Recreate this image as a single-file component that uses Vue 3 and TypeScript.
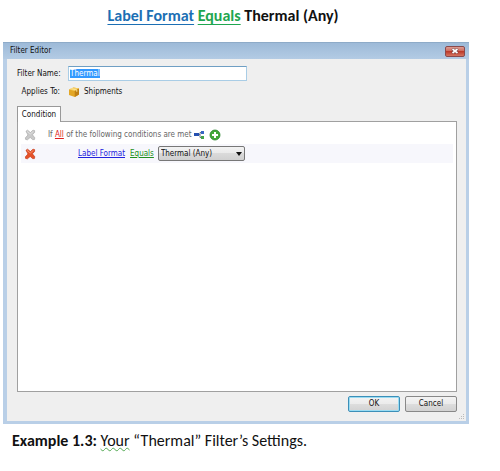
<script setup lang="ts">
import { onMounted, ref } from 'vue'

const filterName = ref('Thermal')
const labelFormat = ref('Thermal (Any)')
const formats: string[] = ['Thermal (Any)', 'Standard']
const nameBox = ref<HTMLInputElement | null>(null)

onMounted(() => {
  nameBox.value?.focus()
  nameBox.value?.select()
})
</script>

<template>
  <main class="page">
    <h1 class="heading">
      <span class="blue">Label Format</span> <span class="green">Equals</span> Thermal (Any)
    </h1>

    <section class="window">
      <header class="titlebar">
        <span>Filter Editor</span>
        <button class="close" type="button" aria-label="Close">
          <svg viewBox="0 0 8 6" width="8" height="6">
            <path d="M1.3 .8 6.7 5.2M6.7 .8 1.3 5.2" stroke="#6b3030" stroke-width="2.8" />
            <path d="M1.5 1 6.5 5M6.5 1 1.5 5" stroke="#fff" stroke-width="1.8" />
          </svg>
        </button>
      </header>

      <div class="body">
        <div class="fields">
          <label for="filter-name">Filter Name:</label>
          <input id="filter-name" ref="nameBox" v-model="filterName" type="text" spellcheck="false" />
          <span class="caption">Applies To:</span>
          <span class="target">
            <svg viewBox="0 0 12 12" width="12" height="12">
              <path d="M1 3.6 5.5 1.4 11 2.6v6L6.8 11 1 9Z" fill="#e3a726" />
              <path d="M1 3.6 5.5 1.4 11 2.6 6.7 5Z" fill="#f6ce62" />
              <path d="M6.7 5 11 2.6v6L6.8 11Z" fill="#c08014" />
              <path d="M3.2 2.6 8.8 4v1.8" fill="none" stroke="#fbe59b" stroke-width=".9" />
            </svg>
            Shipments
          </span>
        </div>

        <button class="tab" type="button">Condition</button>
        <div class="panel">
          <div class="row">
            <button class="icon remove" type="button" aria-label="Remove group" disabled>
              <svg viewBox="0 0 12 12" width="12" height="12">
                <path d="M2 2.2 3.6 1.2 6.4 3.6 9 1.2 10.6 1.6 10.6 3.4 8.4 5.8 10.8 8.8 10.4 10.6 8.6 10.6 6.2 8.4 3.4 10.8 1.6 10.4 1.4 8.8 4 6Z" fill="#c9c9c9" stroke="#ababab" stroke-width=".7" />
                <path d="M3 2.4 6.3 5 9.4 2.4" fill="none" stroke="#e2e2e2" stroke-width=".9" />
              </svg>
            </button>
            <span class="sentence">If <a href="#" class="all">All</a> of the following conditions are met</span>
            <button class="icon" type="button" aria-label="Add group">
              <svg viewBox="0 0 12 12" width="12" height="12">
                <path d="M5 5.5h2M9 3.5H7v5h2" fill="none" stroke="#65758a" stroke-width="1" />
                <path d="M1 4h5v3H1z" fill="#2450b0" />
                <path d="M8 2h3v3H8z" fill="#3867c5" />
                <path d="M8 7h3v3H8z" fill="#43a348" />
              </svg>
            </button>
            <button class="icon add" type="button" aria-label="Add condition">
              <svg viewBox="0 0 12 12" width="12" height="12">
                <circle cx="6" cy="6" r="5" fill="#43a839" stroke="#27822b" stroke-width=".8" />
                <path d="M6 3v6M3 6h6" stroke="#fff" stroke-width="2" />
              </svg>
            </button>
          </div>
          <div class="row condition">
            <button class="icon remove" type="button" aria-label="Remove condition">
              <svg viewBox="0 0 12 12" width="12" height="12">
                <path d="M2 2.2 3.6 1.2 6.4 3.6 9 1.2 10.6 1.6 10.6 3.4 8.4 5.8 10.8 8.8 10.4 10.6 8.6 10.6 6.2 8.4 3.4 10.8 1.6 10.4 1.4 8.8 4 6Z" fill="#e65329" stroke="#c63a1a" stroke-width=".7" />
                <path d="M3 2.4 6.3 5 9.4 2.4" fill="none" stroke="#f79a72" stroke-width=".9" />
              </svg>
            </button>
            <a href="#" class="field">Label Format</a>
            <a href="#" class="operator">Equals</a>
            <span class="picker">
              <select v-model="labelFormat" aria-label="Label format value">
                <option v-for="format in formats" :key="format">{{ format }}</option>
              </select>
              <svg viewBox="0 0 6 4" width="6" height="4"><path d="M0 0h6L3 4Z" fill="#111" /></svg>
            </span>
          </div>
        </div>

        <footer class="actions">
          <button class="push primary" type="button">OK</button>
          <button class="push" type="button">Cancel</button>
        </footer>
        <svg class="grip" viewBox="0 0 6 6" width="6" height="6">
          <path d="M4 0h1v1H4zM2 2h1v1H2zM4 2h1v1H4zM0 4h1v1H0zM2 4h1v1H2zM4 4h1v1H4z" fill="#bbb" />
        </svg>
      </div>
    </section>

    <p class="example"><b>Example 1.3:</b> <span class="wavy">Your</span> “Thermal” Filter’s Settings.</p>
  </main>
</template>

<style>
body {
  background: #fff;
}
</style>

<style scoped>
* {
  box-sizing: border-box;
}
.page {
  padding: 5px 31px 0 3px;
  font-family: Carlito, Lato, sans-serif;
  color: #111;
}
.heading {
  margin: 0 0 15px;
  padding-right: 26px;
  font-size: 16px;
  line-height: 22px;
  font-weight: 700;
  text-align: center;
}
.blue,
.green {
  text-decoration: underline;
  text-underline-offset: 3px;
  text-decoration-thickness: 1px;
}
.blue {
  color: #1c6fb4;
}
.green {
  color: #1fa650;
}
.window {
  padding: 0 3px 3px 4px;
  border-top: 1px solid #8eabc8;
  background: #b9cfe7;
  font-family: "DejaVu Sans Condensed", "DejaVu Sans", sans-serif;
  font-size: 8px;
  line-height: 12px;
}
.titlebar {
  display: flex;
  align-items: center;
  justify-content: space-between;
  height: 16px;
  margin: 0 -3px 0 -4px;
  padding: 0 4px 0 7px;
  background: linear-gradient(#9dbad8, #b3cbe4);
}
button,
input,
select {
  font: inherit;
  color: inherit;
}
.close {
  display: flex;
  align-items: center;
  justify-content: center;
  width: 20px;
  height: 11px;
  padding: 0;
  border: 1px solid #8a4a4c;
  border-radius: 2px;
  background: linear-gradient(#dd9c92, #cd6a5c 45%, #bd3b2b 50%, #d47460);
}
.body {
  position: relative;
  padding: 7px 9px 9px 10px;
  background: #efefef;
}
.fields {
  display: grid;
  grid-template-columns: 43px minmax(0, 179px);
  column-gap: 8px;
  row-gap: 5px;
  align-items: center;
}
.caption {
  text-align: right;
}
.fields label {
  text-align: right;
  white-space: nowrap;
}
.fields input {
  width: 100%;
  height: 15px;
  padding: 0 1px;
  border: 1px solid #a9cde6;
  border-top-color: #6f9fc4;
  background: #fff;
  outline: none;
}
.fields input::selection {
  background: #3399ff;
  color: #fff;
}
.target {
  display: flex;
  align-items: center;
  gap: 4px;
}
.tab {
  display: block;
  position: relative;
  z-index: 1;
  width: 44px;
  height: 16px;
  margin: 8px 0 -1px;
  padding: 0;
  border: 1px solid #999;
  border-bottom: 0;
  background: #fff;
}
.panel {
  min-height: 271px;
  padding: 3px;
  border: 1px solid #a0a0a0;
  background: #fff;
}
.row {
  display: flex;
  align-items: center;
  height: 19px;
  padding-left: 3px;
  color: #666;
}
.condition {
  background: #f7f7fc;
}
.icon {
  display: flex;
  padding: 0;
  border: 0;
  background: none;
}
.remove {
  margin-right: 12px;
}
.sentence {
  margin-right: 1px;
}
.add {
  margin-left: 4px;
}
.all {
  color: #e02020;
}
.field {
  margin-left: 30px;
  color: #2222dd;
}
.operator {
  margin: 0 4px 0 5px;
  color: #209020;
}
.picker {
  display: grid;
  align-items: center;
  width: 87px;
  color: #111;
}
.picker > * {
  grid-area: 1 / 1;
}
.picker svg {
  justify-self: end;
  margin-right: 3px;
  pointer-events: none;
}
.picker select {
  appearance: none;
  width: 100%;
  height: 15px;
  padding: 0 2px;
  border: 1px solid #777;
  border-radius: 2px;
  background: linear-gradient(#f3f3f3, #e9e9e9 50%, #dadada 50%, #d0d0d0);
}
.actions {
  display: flex;
  justify-content: flex-end;
  gap: 5px;
  margin-top: 4px;
}
.push {
  width: 52px;
  height: 16px;
  padding: 0;
  border: 1px solid #888;
  border-radius: 2px;
  background: linear-gradient(#f3f3f3, #ebebeb 50%, #dddddd 50%, #d2d2d2);
}
.primary {
  border-color: #3c8fb8;
  box-shadow: inset 0 0 0 1px #9adcf3;
}
.grip {
  position: absolute;
  right: 1px;
  bottom: 1px;
}
.example {
  margin: 6px 0 0;
  padding-left: 9px;
  font-size: 16px;
  line-height: 22px;
}
.wavy {
  text-decoration: underline wavy #55aa55 1px;
}
</style>
